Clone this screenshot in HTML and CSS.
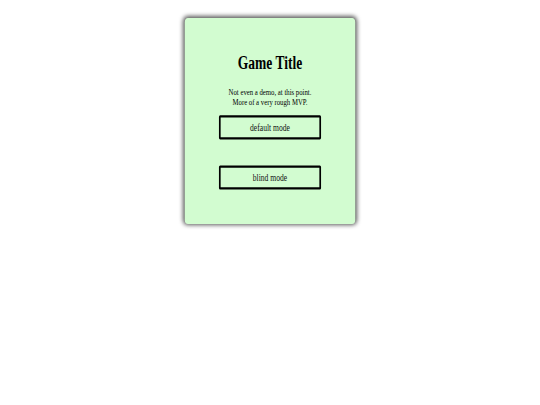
FILE: index.html
```html
<!DOCTYPE html>
<html lang="en">
<head>
    <meta charset="UTF-8">
    <meta name="viewport" content="width=device-width, initial-scale=1.0">
    <title>Game Title</title>
    <link rel="stylesheet" href="styles.css">
</head>
<body>
    <div class="screen">
        <div class="stage">
            <div class="menu">
                <h1>Game Title</h1>
                <p>Not even a demo, at this point.<br>More of a very rough MVP.</p>
                <button class="mode" type="button">default mode</button>
                <button class="mode" type="button">blind mode</button>
            </div>
        </div>
    </div>
</body>
</html>
```

FILE: styles.css
```css
/* Page */
body {
    margin: 0;
    background: #ffffff;
}

/* Visible window; clips the unscaled layout box of the stage */
.screen {
    width: 540px;
    height: 405px;
    overflow: hidden;
}

/* 1280x720 stage squeezed into the window */
.stage {
    width: 1280px;
    height: 720px;
    display: flex;
    flex-direction: column;
    align-items: center;
    transform: scale(0.421875, 0.5625);
    transform-origin: 0 0;
    font-family: "Liberation Serif", "Times New Roman", serif;
}

/* Menu card */
.menu {
    margin-top: 32px;
    width: 404px;
    height: 366px;
    box-sizing: border-box;
    padding-top: 40px;
    background: #d2fcd0;
    border-radius: 8px;
    box-shadow: 0 0 9px 2px rgba(0, 0, 0, 0.65);
    display: flex;
    flex-direction: column;
    align-items: center;
    text-align: center;
}

h1 {
    font-size: 32px;
    margin: 21px 0 24px;
}

p {
    font-size: 16px;
    margin: 0 0 15px;
}

/* Mode buttons */
.mode {
    width: 242px;
    height: 43px;
    padding: 0;
    background: transparent;
    border: 4px solid #000000;
    border-radius: 3px;
    font-family: inherit;
    font-size: 18px;
    color: #111111;
    cursor: pointer;
}

.mode + .mode {
    margin-top: 46px;
}
```
